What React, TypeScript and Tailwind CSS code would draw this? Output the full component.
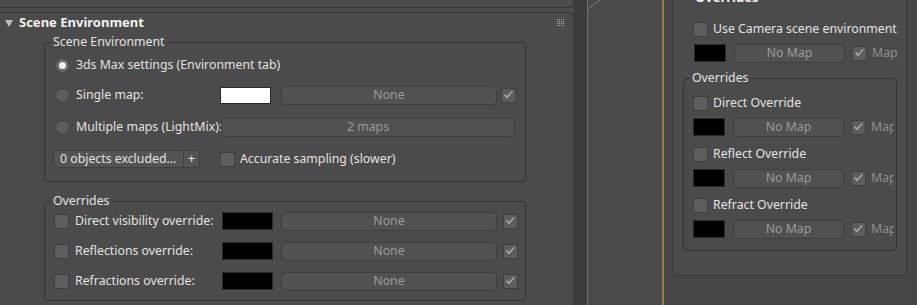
import React from "react";

// 3ds Max style rollout: Scene Environment + camera Overrides panel

const font = "font-['Noto_Sans',sans-serif]";

function Radio({ on }: { on?: boolean }) {
  return (
    <span
      className={`flex h-[15px] w-[15px] shrink-0 items-center justify-center rounded-full border border-[#3e3e3e] ${
        on ? "bg-[#6c6c6c]" : "bg-[#5d5d5d]"
      }`}
    >
      {on && <span className="h-[7px] w-[7px] rounded-full bg-[#f0f0f0]" />}
    </span>
  );
}

function Check({ checked, className = "" }: { checked?: boolean; className?: string }) {
  return (
    <span
      className={`flex h-[15px] w-[15px] shrink-0 items-center justify-center border border-[#3f3f3f] bg-[#5d5d5d] ${className}`}
    >
      {checked && (
        <svg width="11" height="10" viewBox="0 0 11 10">
          <path d="M1 5.2 L4 8.4 L10 1.6 L8.6 1 L4 6.1 L2.3 4.1 Z" fill="#a6a6a6" />
        </svg>
      )}
    </span>
  );
}

function MapButton({ label, className = "" }: { label: string; className?: string }) {
  return (
    <span
      className={`flex shrink-0 items-center justify-center rounded-[4px] border border-[#3f3f3f] bg-[#515151] text-[12.3px] text-[#9a9a9a] ${className}`}
    >
      {label}
    </span>
  );
}

function Swatch({ white, className = "" }: { white?: boolean; className?: string }) {
  return (
    <span
      className={`shrink-0 border border-[#2b2b2b] ${white ? "bg-white" : "bg-black"} ${className}`}
    />
  );
}

function Group({
  title,
  className = "",
  children,
}: {
  title: string;
  className?: string;
  children: React.ReactNode;
}) {
  return (
    <div className={`relative rounded-[4px] border border-[#333333] ${className}`}>
      <span className="absolute -top-[9px] left-[6px] z-10 bg-[#4b4b4b] px-[2px] text-[12.3px] leading-[16px] text-[#e2e2e2]">
        {title}
      </span>
      {children}
    </div>
  );
}

function OverrideRow({ label }: { label: string }) {
  return (
    <div className="flex h-[20px] items-center">
      <Check />
      <span className="ml-[6px] w-[147px] text-[12.3px] text-[#e2e2e2]">{label}</span>
      <Swatch className="h-[18px] w-[51px]" />
      <MapButton label="None" className="ml-[8px] h-[19px] w-[216px]" />
      <Check checked className="ml-[6px]" />
    </div>
  );
}

function CamOverride({ label, first }: { label: string; first?: boolean }) {
  return (
    <>
      <div className={`flex h-[15px] items-center ${first ? "mt-[17px]" : "mt-[11px]"}`}>
        <Check />
        <span className="ml-[5px] whitespace-nowrap text-[12.3px] text-[#e2e2e2]">{label}</span>
      </div>
      <MapRow className="mt-[7px]" />
    </>
  );
}

function MapRow({ className = "" }: { className?: string }) {
  return (
    <div className={`flex h-[18px] items-center whitespace-nowrap ${className}`}>
      <Swatch className="h-[18px] w-[32px]" />
      <MapButton label="No Map" className="ml-[8px] h-[19px] w-[111px]" />
      <Check checked className="ml-[7px]" />
      <span className="ml-[5px] text-[12.3px] text-[#8e8e8e]">Map</span>
    </div>
  );
}

export default function App() {
  return (
    <div className={`${font} flex h-[305px] w-[917px] overflow-hidden bg-[#4b4b4b]`}>
      {/* left rollout column */}
      <div className="flex w-[574px] shrink-0 flex-col">
        <div className="h-[8px] shrink-0 rounded-br-[4px] border-b border-r border-[#363636]" />
        <div className="mt-[4px] flex-1 rounded-tr-[4px] border-r border-t border-[#363636]">
          <div className="flex h-[20px] items-center pl-[5px] pr-[8px]">
            <svg width="8" height="7" viewBox="0 0 8 7">
              <path d="M0 0 H8 L4 7 Z" fill="#bdbdbd" />
            </svg>
            <span className="ml-[6px] text-[13px] font-bold text-[#f2f2f2]">Scene Environment</span>
            <svg className="ml-auto" width="8" height="8" viewBox="0 0 8 8">
              {[0, 2, 4, 6].map((y) =>
                [0, 2, 4, 6].map((x) => (
                  <rect key={`${x}-${y}`} x={x} y={y} width="1" height="1" fill="#b5b5b5" />
                ))
              )}
            </svg>
          </div>

          <Group title="Scene Environment" className="ml-[44px] mt-[9px] w-[482px] pb-[12px] pl-[10px] pt-[12px]">
            <div className="flex h-[20px] items-center">
              <Radio on />
              <span className="ml-[6px] text-[12.3px] text-[#e2e2e2]">3ds Max settings (Environment tab)</span>
            </div>
            <div className="mt-[10px] flex h-[20px] items-center">
              <Radio />
              <span className="ml-[6px] w-[144px] text-[12.3px] text-[#e2e2e2]">Single map:</span>
              <Swatch white className="h-[17px] w-[51px]" />
              <MapButton label="None" className="ml-[10px] h-[19px] w-[216px]" />
              <Check checked className="ml-[4px]" />
            </div>
            <div className="mt-[12px] flex h-[20px] items-center">
              <Radio />
              <span className="ml-[6px] w-[145px] whitespace-nowrap text-[12.3px] text-[#e2e2e2]">
                Multiple maps (LightMix):
              </span>
              <MapButton label="2 maps" className="h-[19px] w-[294px]" />
            </div>
            <div className="-ml-[2px] mt-[12px] flex h-[20px] items-center">
              <span className="flex h-[18px] w-[131px] items-center rounded-l-[4px] border border-[#3f3f3f] bg-[#545454] pl-[6px] text-[12.3px] text-[#e2e2e2]">
                0 objects excluded...
              </span>
              <span className="flex h-[18px] w-[16px] items-center justify-center rounded-r-[4px] border border-l-0 border-[#3f3f3f] bg-[#545454] text-[13px] text-[#e2e2e2]">
                +
              </span>
              <Check className="ml-[20px]" />
              <span className="ml-[5px] text-[12.3px] text-[#e2e2e2]">Accurate sampling (slower)</span>
            </div>
          </Group>

          <Group title="Overrides" className="ml-[44px] mt-[19px] w-[482px] pb-[9px] pl-[9px] pt-[9px]">
            <div className="flex flex-col gap-[10px]">
              <OverrideRow label="Direct visibility override:" />
              <OverrideRow label="Reflections override:" />
              <OverrideRow label="Refractions override:" />
            </div>
          </Group>
        </div>
      </div>

      {/* splitter strip */}
      <div className="w-[13px] shrink-0 bg-[#3c3c3c]" />
      <div className="w-px shrink-0 bg-[#717171]" />
      <div className="w-[74px] shrink-0 bg-[#4a4a4a]">
        <svg width="14" height="10" viewBox="0 0 14 10">
          <path d="M0 9 L12 0" stroke="#7a7a7a" strokeWidth="1" />
        </svg>
      </div>
      <div className="w-[2px] shrink-0 bg-[#9b7d3d]" />
      <div className="w-[8px] shrink-0 bg-[#464646]" />

      {/* camera overrides panel */}
      <div className="flex w-[245px] shrink-0 flex-col bg-[#464646]">
        <div className="-mt-[12px] flex h-[288px] w-[235px] flex-col rounded-[5px] border border-[#3a3a3a] bg-[#4b4b4b] pl-[10px]">
          <div className="flex h-[18px] items-center pl-[12px] text-[13px] font-bold text-[#f2f2f2]">
            Overrides
          </div>
          <div className="ml-[10px] mt-[15px] flex h-[15px] items-center">
            <Check />
            <span className="ml-[5px] whitespace-nowrap text-[12.3px] text-[#e2e2e2]">
              Use Camera scene environment
            </span>
          </div>
          <MapRow className="ml-[11px] mt-[7px]" />
          <Group title="Overrides" className="mt-[16px] h-[173px] w-[214px] pl-[9px] pr-[2px]">
            <div className="h-full overflow-hidden">
              <CamOverride label="Direct Override" first />
              <CamOverride label="Reflect Override" />
              <CamOverride label="Refract Override" />
            </div>
          </Group>
        </div>
      </div>
    </div>
  );
}
